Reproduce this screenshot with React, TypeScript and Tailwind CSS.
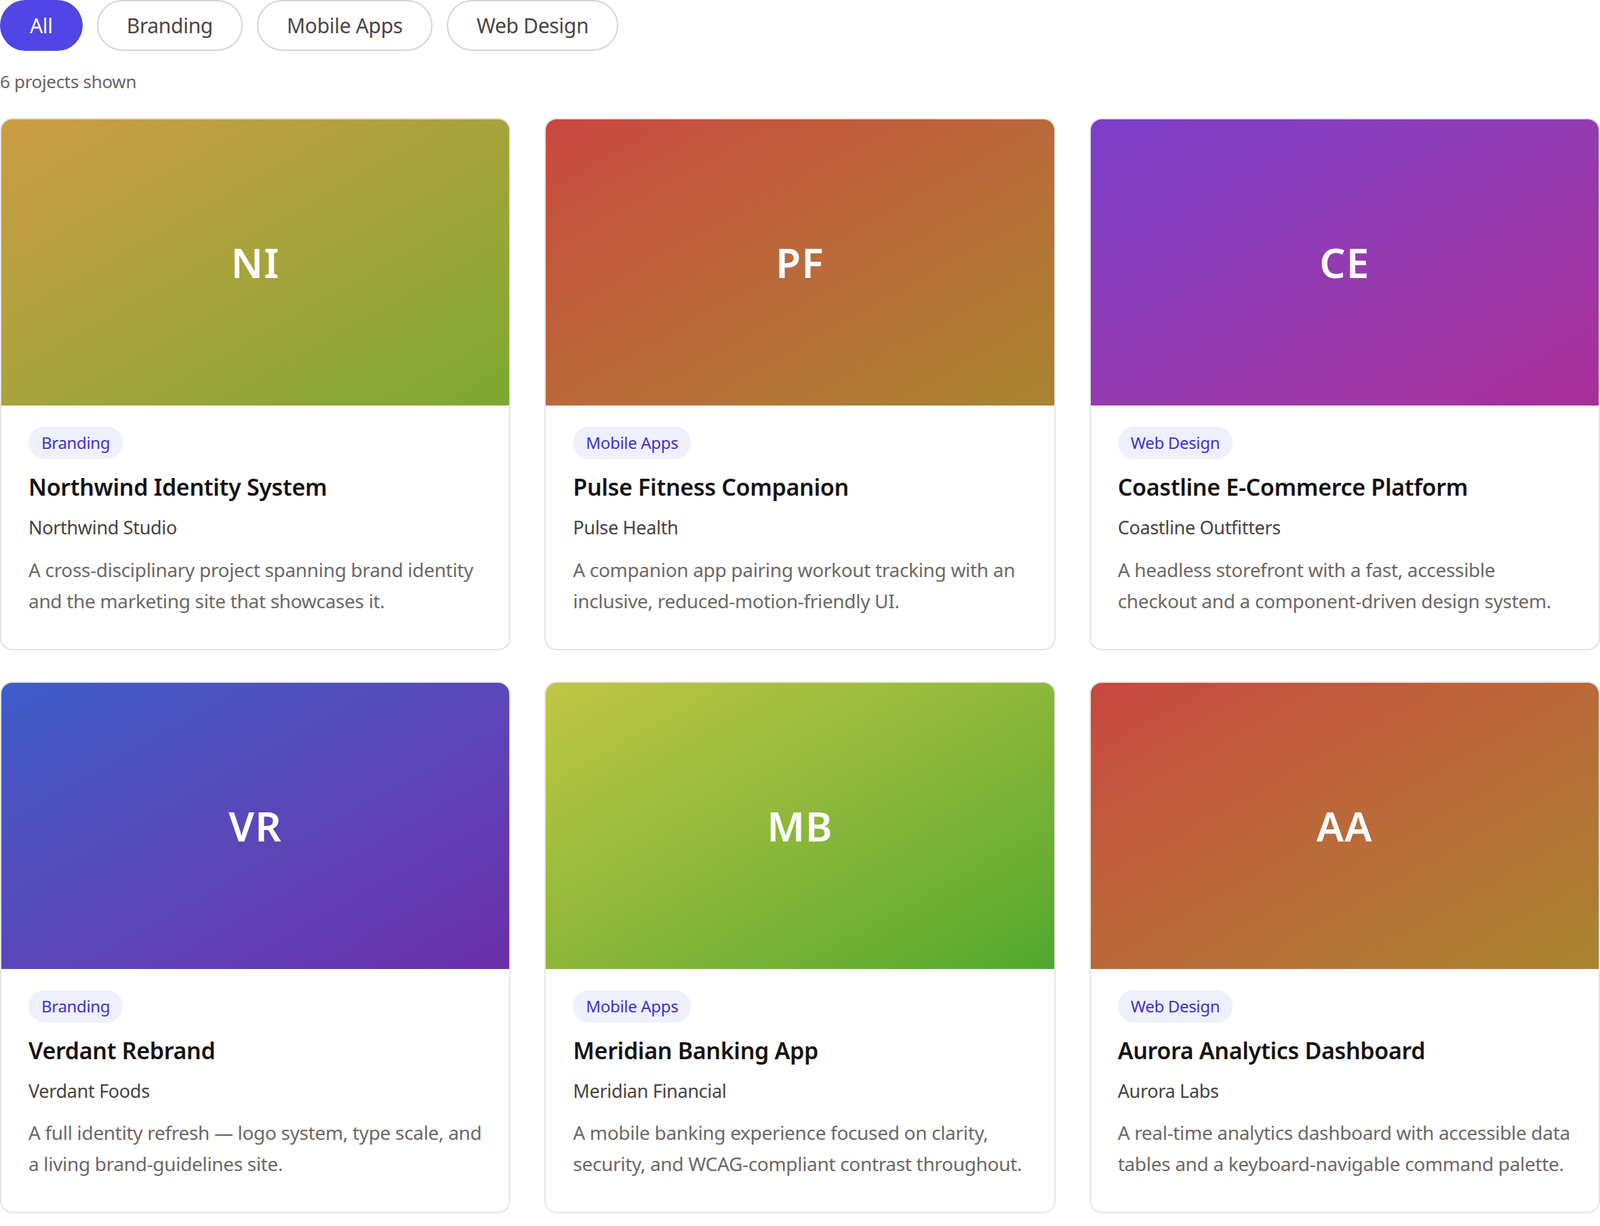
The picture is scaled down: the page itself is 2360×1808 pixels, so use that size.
const filters = ['All', 'Branding', 'Mobile Apps', 'Web Design'];

const projects = [
  { initials: 'NI', tag: 'Branding', title: 'Northwind Identity System', client: 'Northwind Studio', desc: 'A cross-disciplinary project spanning brand identity and the marketing site that showcases it.', bg: 'bg-gradient-to-br from-[#cc9c45] to-[#7aa92f]' },
  { initials: 'PF', tag: 'Mobile Apps', title: 'Pulse Fitness Companion', client: 'Pulse Health', desc: 'A companion app pairing workout tracking with an inclusive, reduced-motion-friendly UI.', bg: 'bg-gradient-to-br from-[#c94640] to-[#a8842f]' },
  { initials: 'CE', tag: 'Web Design', title: 'Coastline E-Commerce Platform', client: 'Coastline Outfitters', desc: 'A headless storefront with a fast, accessible checkout and a component-driven design system.', bg: 'bg-gradient-to-br from-[#7c3fcb] to-[#aa2f98]' },
  { initials: 'VR', tag: 'Branding', title: 'Verdant Rebrand', client: 'Verdant Foods', desc: 'A full identity refresh — logo system, type scale, and a living brand-guidelines site.', bg: 'bg-gradient-to-br from-[#3d5dcb] to-[#6a2ea8]' },
  { initials: 'MB', tag: 'Mobile Apps', title: 'Meridian Banking App', client: 'Meridian Financial', desc: 'A mobile banking experience focused on clarity, security, and WCAG-compliant contrast throughout.', bg: 'bg-gradient-to-br from-[#c0c644] to-[#4ea82f]' },
  { initials: 'AA', tag: 'Web Design', title: 'Aurora Analytics Dashboard', client: 'Aurora Labs', desc: 'A real-time analytics dashboard with accessible data tables and a keyboard-navigable command palette.', bg: 'bg-gradient-to-br from-[#c94640] to-[#a8842f]' },
];

const App = () => {
  return (
    <div className="w-[2360px] bg-white font-['Inter',sans-serif] tracking-[-0.02em]">
      <div className="flex gap-[21px]">
        {filters.map((f, i) => (
          <button
            key={f}
            className={
              i === 0
                ? 'h-[75px] px-[44px] rounded-full bg-[#4f46e5] text-white text-[30px]'
                : 'h-[75px] px-[42px] rounded-full border-2 border-[#d9d5d1] text-[#4a4541] text-[30px] bg-white'
            }
          >
            {f}
          </button>
        ))}
      </div>
      <p className="mt-[26px] text-[26px] text-[#6b645f]">6 projects shown</p>
      <div className="mt-[34px] grid grid-cols-3 gap-x-[50px] gap-y-[46px]">
        {projects.map(p => (
          <div key={p.title} className="rounded-[18px] border-2 border-[#e5e3e1] overflow-hidden bg-white">
            <div className={`${p.bg} h-[422px] flex items-center justify-center`}>
              <span className="text-white text-[60px] font-semibold tracking-[0.02em]">{p.initials}</span>
            </div>
            <div className="px-[40px] pt-[31px] pb-[48px]">
              <span className="inline-block rounded-full bg-[#eef0fd] text-[#3f2fd3] text-[24px] px-[19px] py-[6px]">{p.tag}</span>
              <h3 className="mt-[16px] text-[34px] font-semibold text-[#16120f]">{p.title}</h3>
              <p className="mt-[14px] text-[27px] text-[#47423e]">{p.client}</p>
              <p className="mt-[18px] text-[28px] leading-[46px] text-[#6e6762]">{p.desc}</p>
            </div>
          </div>
        ))}
      </div>
    </div>
  );
};

export default App;
